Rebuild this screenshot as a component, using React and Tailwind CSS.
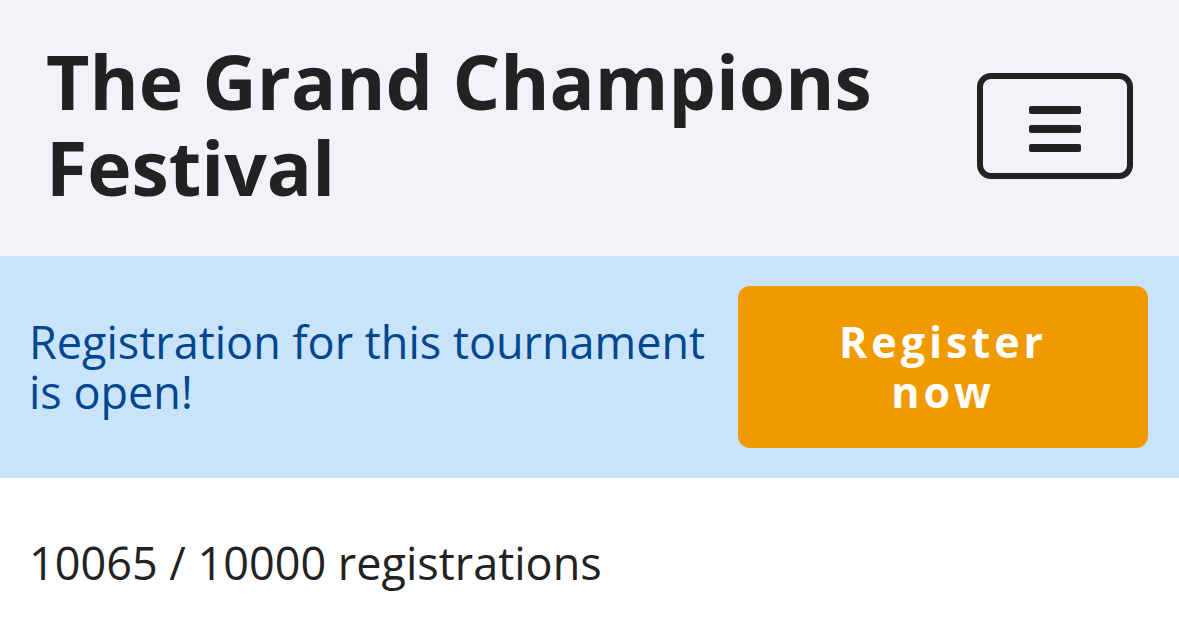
import React from "react";

export default function App() {
  return (
    <div className="min-h-screen bg-white text-[#222]" style={{ fontFamily: '"Open Sans", sans-serif' }}>
      {/* Header */}
      <header className="flex items-center justify-between h-[256px] bg-[#f2f2f8] pl-[46px] pr-[46px]">
        <h1 className="text-[75px] leading-[86px] font-bold text-[#222] pb-[8px]">
          The Grand Champions
          <br />
          Festival
        </h1>
        <button className="flex items-center justify-center w-[156px] h-[106px] mb-[4px] pt-[6px] border-[6px] border-[#222] rounded-[14px]">
          <span className="flex flex-col gap-[11px]">
            <span className="block w-[52px] h-[8px] rounded-[2px] bg-[#222]" />
            <span className="block w-[52px] h-[8px] rounded-[2px] bg-[#222]" />
            <span className="block w-[52px] h-[8px] rounded-[2px] bg-[#222]" />
          </span>
        </button>
      </header>

      {/* Registration banner */}
      <div className="flex items-center justify-between gap-6 bg-[#c9e3fb] pl-[29px] pr-[31px] py-[30px]">
        <p className="text-[45px] leading-[50px] text-[#00478f]">
          Registration for this tournament
          <br />
          is open!
        </p>
        <button className="shrink-0 w-[410px] h-[162px] rounded-[12px] bg-[#f09a00] text-white text-[43px] leading-[50px] font-bold tracking-[4px]">
          Register
          <br />
          now
        </button>
      </div>

      {/* Count */}
      <div className="pl-[29px] pr-[31px] pt-[55px]">
        <p className="text-[45px] leading-[60px] text-[#222]">10065 / 10000 registrations</p>
      </div>
    </div>
  );
}
